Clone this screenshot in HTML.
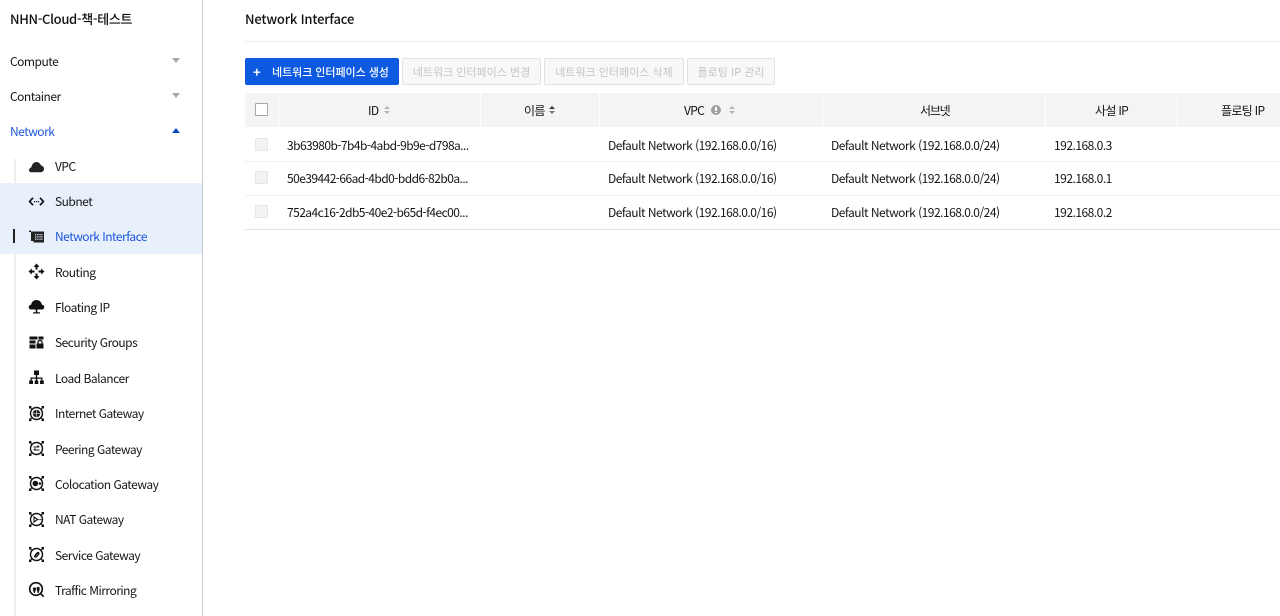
<!DOCTYPE html>
<html lang="ko"><head><meta charset="utf-8"><title>Network Interface</title>
<style>
*{box-sizing:border-box}
html,body{margin:0;padding:0;width:1280px;height:616px;overflow:hidden;background:#fff}
body{font-family:"Noto Sans CJK KR","Liberation Sans",sans-serif;font-size:12px;color:#151515;position:relative}
.a{position:absolute;white-space:nowrap;line-height:18px;letter-spacing:-.5px}
.h{letter-spacing:-.7px}
.box{position:absolute}
.ic{position:absolute;left:28px;width:17px;height:17px}
.btn{position:absolute;top:58px;height:27px;border:1px solid #e2e2e2;border-radius:2px;background:#f8f8f8;color:#c4c4c4;font-size:11px;line-height:26px;text-align:center;white-space:nowrap}
.cb{position:absolute;left:255px;width:13px;height:13px;background:#f3f3f3;border:1px solid #e6e6e6;border-radius:1px}
.th{position:absolute;top:93px;height:34px;background:#f4f4f4}
.sort{position:absolute;width:0;height:0;border-left:3px solid transparent;border-right:3px solid transparent}
</style></head><body>

<div class="box" style="left:202px;top:0;width:1px;height:616px;background:#c9c9c9"></div>
<div class="box" style="left:14px;top:159px;width:2px;height:457px;background:#eeeeee"></div>
<div class="box" style="left:0;top:183px;width:202px;height:71px;background:#e8f0fc"></div>
<div class="box" style="left:13px;top:229px;width:2px;height:14px;background:#222"></div>

<div class="a" style="left:10px;top:9px;font-size:13px;font-weight:500;color:#111;line-height:20px;letter-spacing:-.33px">NHN-Cloud-책-테스트</div>
<div class="a" style="left:10px;top:53px">Compute</div>
<div class="a" style="left:10px;top:88px">Container</div>
<div class="a" style="left:10px;top:123px;color:#1a56db">Network</div>
<div class="box" style="left:172px;top:58px;width:0;height:0;border-left:4px solid transparent;border-right:4px solid transparent;border-top:5px solid #a8a8a8"></div>
<div class="box" style="left:172px;top:93px;width:0;height:0;border-left:4px solid transparent;border-right:4px solid transparent;border-top:5px solid #a8a8a8"></div>
<div class="box" style="left:172px;top:128px;width:0;height:0;border-left:4px solid transparent;border-right:4px solid transparent;border-bottom:5px solid #0b4cc4"></div>

<div class="a" style="left:55px;top:158px">VPC</div>
<div class="a" style="left:55px;top:193px">Subnet</div>
<div class="a" style="left:55px;top:228px;color:#1a56db">Network Interface</div>
<div class="a" style="left:55px;top:264px">Routing</div>
<div class="a" style="left:55px;top:299px">Floating IP</div>
<div class="a" style="left:55px;top:334px">Security Groups</div>
<div class="a" style="left:55px;top:370px">Load Balancer</div>
<div class="a" style="left:55px;top:405px">Internet Gateway</div>
<div class="a" style="left:55px;top:441px">Peering Gateway</div>
<div class="a" style="left:55px;top:476px">Colocation Gateway</div>
<div class="a" style="left:55px;top:511px">NAT Gateway</div>
<div class="a" style="left:55px;top:547px">Service Gateway</div>
<div class="a" style="left:55px;top:582px">Traffic Mirroring</div>

<!-- VPC -->
<svg class="ic" style="top:158px" viewBox="0 0 17 17"><path fill="#222" d="M1 12.500C1 10.800 2 9.600 3.400 9.200 3.800 6.500 5.800 4 8.400 4c2.200 0 3.800 1.500 4.600 3.500 1.800.2 3 1.600 3 3.400 0 1.800-1.400 3.300-3.200 3.300H3.500C2 14.200 1 13.700 1 12.500z"/></svg>
<!-- Subnet -->
<svg class="ic" style="top:193px" viewBox="0 0 17 17"><path fill="none" stroke="#111" stroke-width="1.700" d="M5 4.800L1.600 8.500 5 12.200M12 4.800l3.400 3.700-3.400 3.700"/><path fill="#222" d="M5.900 8h1.300v1.300H5.900zM7.900 8h1.300v1.300H7.900zM9.900 8h1.300v1.300H9.900z"/></svg>
<!-- NI -->
<svg class="ic" style="top:228px" viewBox="0 0 17 17"><path fill="#222" d="M1 2.500h2v1h13v11H5.500v-1.500H3V4H1z"/><path fill="#d5e0f2" d="M7 6h1.300v1.300H7zM9.200 6h1.300v1.300H9.200zM11.400 6h1.300v1.300h-1.300zM13.300 6h1.200v1.300h-1.200zM7 8.300h1.300v1.300H7zM9.200 8.300h1.300v1.300H9.200zM11.400 8.300h1.300v1.300h-1.300zM13.300 8.300h1.200v1.300h-1.200zM7 10.600h1.300v1.300H7zM9.200 10.600h1.300v1.300H9.200zM11.400 10.600h1.300v1.300h-1.300zM13.300 10.600h1.200v1.300h-1.200z"/></svg>
<!-- Routing -->
<svg class="ic" style="top:263px" viewBox="0 0 17 17"><path fill="#111" d="M8.500.5l3 3.400H9.500V6.500h-2V3.900H5.500zM8.500 16.500l-3-3.400h2v-2.600h2v2.600h2zM.5 8.500l3.400-3v2h2.600v2H3.900v2zM16.500 8.500l-3.400 3v-2h-2.600v-2h2.600v-2z"/></svg>
<!-- Floating IP -->
<svg class="ic" style="top:298px" viewBox="0 0 17 17"><path fill="#111" d="M2 11.200C.8 10.700.5 9.300.9 8.300c.4-1 1.200-1.500 2.200-1.500C3.500 4 5.800 2 8.500 2s5 2 5.400 4.800c1 0 1.800.5 2.200 1.500.4 1 .1 2.400-1.100 2.900-.5.2-1 .300-1.500.300H3.500C3 11.500 2.500 11.400 2 11.200z"/><path fill="#111" d="M7.700 11h1.600v3.300H12v1.200H5v-1.200h2.700z"/></svg>
<!-- Security Groups -->
<svg class="ic" style="top:334px" viewBox="0 0 17 17"><path fill="#111" d="M1.500 2.500h8v3h-8zM10.500 2.500h5v3h-5zM1.500 6.500h6v3h-6zM1.500 10.500h6v4h-6zM8.500 9.500h7v5h-7z"/><path fill="none" stroke="#111" stroke-width="1.200" d="M10 9.500V8c0-1 .8-1.500 2-1.500s2 .5 2 1.500v1.500"/></svg>
<!-- Load Balancer -->
<svg class="ic" style="top:369px" viewBox="0 0 17 17"><path fill="#111" d="M6 1.500h5v4.500H9.200v2.500H14.500v3H15.800v3.500h-3.800v-3.500h1.200V9.800H9.200v1.700h1.100v3.500H6.700v-3.500h1.100V9.800H3.800v1.700H5V15H1.200v-3.500h1.300v-3h5.300V6H6z"/></svg>

<svg width="0" height="0" style="position:absolute"><defs>
<g id="gw"><circle cx="8.500" cy="8.500" r="6" fill="none" stroke="#111" stroke-width="1.400"/>
<path fill="none" stroke="#111" stroke-width="1.100" d="M2.500 3l1.500 1.500M14.500 3L13 4.500M2.500 14L4 12.500M14.500 14L13 12.500"/>
<path fill="#111" d="M1 1h2.400v2.400H1zM13.600 1H16v2.400h-2.400zM1 13.600h2.400V16H1zM13.600 13.600H16V16h-2.400z"/></g>
</defs></svg>

<!-- Internet Gateway -->
<svg class="ic" style="top:405px" viewBox="0 0 17 17"><use href="#gw"/><circle cx="8.500" cy="8.500" r="3.800" fill="#222"/><path fill="none" stroke="#ccc" stroke-width=".7" d="M5 8.500h7M8.500 5v7"/></svg>
<!-- Peering -->
<svg class="ic" style="top:440px" viewBox="0 0 17 17"><use href="#gw"/><path fill="none" stroke="#111" stroke-width="1.100" d="M5.500 7h5.500M9.500 5.500L11.300 7M11.500 10H6M7.500 8.500L5.700 10"/></svg>
<!-- Colocation -->
<svg class="ic" style="top:475px" viewBox="0 0 17 17"><use href="#gw"/><path fill="#111" d="M4.500 8.500a2.800 2.800 0 1 1 5.600 0 2.800 2.800 0 1 1-5.600 0z"/><circle cx="11.900" cy="8.500" r="1.300" fill="#111"/></svg>
<!-- NAT -->
<svg class="ic" style="top:511px" viewBox="0 0 17 17"><use href="#gw"/><path fill="none" stroke="#111" stroke-width="1.100" d="M6 6l3.500 2.500L6 11z"/><path fill="#111" d="M10.500 8h1.100v1.100h-1.100zM12.200 8h1.100v1.100h-1.100z"/></svg>
<!-- Service -->
<svg class="ic" style="top:546px" viewBox="0 0 17 17"><use href="#gw"/><path fill="none" stroke="#111" stroke-width="1.200" d="M6 11l5-5M7.200 8.800l1.800-1.800c1-1 2.600.4 1.500 1.600l-2 2c-1 1-2.400 0-1.700-1"/></svg>
<!-- Traffic Mirroring -->
<svg class="ic" style="top:581px" viewBox="0 0 17 17"><circle cx="8" cy="8" r="6.300" fill="none" stroke="#111" stroke-width="1.700"/><path fill="#111" d="M4.800 7.500a1.700 1.700 0 0 1 3.200 0V8L7 12H6L4.800 8zM8.500 7.500a1.600 1.600 0 0 1 3.200 0V8l-1 4h-1z"/><path fill="none" stroke="#111" stroke-width="1.700" d="M12.500 12.500l3.200 3.200"/></svg>

<!-- Main -->
<div class="a" style="left:245px;top:9px;font-size:13px;font-weight:500;color:#111;line-height:20px;letter-spacing:-.18px">Network Interface</div>
<div class="box" style="left:245px;top:41px;width:1035px;height:1px;background:#eeeeee"></div>

<div class="btn" style="left:245px;width:154px;background:#0d5ae0;border-color:#0d5ae0;color:#fff;font-weight:500;text-align:left"><span style="position:absolute;left:7px;top:0;font-size:13px;font-weight:700">+</span><span style="position:absolute;left:26px;top:0;letter-spacing:-.05px">네트워크 인터페이스 생성</span></div>
<div class="btn" style="left:402px;width:139px">네트워크 인터페이스 변경</div>
<div class="btn" style="left:544px;width:140px">네트워크 인터페이스 삭제</div>
<div class="btn" style="left:687px;width:88px">플로팅 IP 관리</div>

<div class="th" style="left:245px;width:33px"></div>
<div class="th" style="left:279px;width:201px"></div>
<div class="th" style="left:481px;width:118px"></div>
<div class="th" style="left:600px;width:222px"></div>
<div class="th" style="left:823px;width:222px"></div>
<div class="th" style="left:1046px;width:131px"></div>
<div class="th" style="left:1178px;width:102px"></div>

<div class="box" style="left:255px;top:103px;width:13px;height:13px;background:#fff;border:1px solid #a8a8a8;border-radius:1px"></div>
<div class="a h" style="left:368px;top:102px">ID</div>
<div class="sort" style="left:384px;top:106px;border-bottom:3px solid #b4b4b4"></div>
<div class="sort" style="left:384px;top:111px;border-top:3px solid #b4b4b4"></div>
<div class="a h" style="left:524px;top:102px">이름</div>
<div class="sort" style="left:549px;top:106px;border-bottom:3px solid #333"></div>
<div class="sort" style="left:549px;top:111px;border-top:3px solid #777"></div>
<div class="a h" style="left:684px;top:102px">VPC</div>
<div class="box" style="left:711px;top:105px;width:10px;height:10px;border-radius:50%;background:#a0a0a0"></div>
<div class="box" style="left:715px;top:107px;width:2px;height:4px;background:#fff"></div>
<div class="box" style="left:715px;top:112px;width:2px;height:1px;background:#fff"></div>
<div class="sort" style="left:729px;top:106px;border-bottom:3px solid #b4b4b4"></div>
<div class="sort" style="left:729px;top:111px;border-top:3px solid #b4b4b4"></div>
<div class="a h" style="left:920px;top:102px;letter-spacing:-1.2px">서브넷</div>
<div class="a h" style="left:1095px;top:102px">사설 IP</div>
<div class="a h" style="left:1221px;top:102px">플로팅 IP</div>

<div class="cb" style="top:138px"></div>
<div class="cb" style="top:171px"></div>
<div class="cb" style="top:205px"></div>

<div class="a" style="left:287px;top:137px;letter-spacing:-.56px">3b63980b-7b4b-4abd-9b9e-d798a...</div>
<div class="a" style="left:287px;top:170px;letter-spacing:-.56px">50e39442-66ad-4bd0-bdd6-82b0a...</div>
<div class="a" style="left:287px;top:204px;letter-spacing:-.56px">752a4c16-2db5-40e2-b65d-f4ec00...</div>

<div class="a" style="left:608px;top:137px">Default Network (192.168.0.0/16)</div>
<div class="a" style="left:608px;top:170px">Default Network (192.168.0.0/16)</div>
<div class="a" style="left:608px;top:204px">Default Network (192.168.0.0/16)</div>

<div class="a" style="left:831px;top:137px">Default Network (192.168.0.0/24)</div>
<div class="a" style="left:831px;top:170px">Default Network (192.168.0.0/24)</div>
<div class="a" style="left:831px;top:204px">Default Network (192.168.0.0/24)</div>

<div class="a" style="left:1054px;top:137px">192.168.0.3</div>
<div class="a" style="left:1054px;top:170px">192.168.0.1</div>
<div class="a" style="left:1054px;top:204px">192.168.0.2</div>

<div class="box" style="left:245px;top:161px;width:1035px;height:1px;background:#f0f0f0"></div>
<div class="box" style="left:245px;top:195px;width:1035px;height:1px;background:#f0f0f0"></div>
<div class="box" style="left:245px;top:229px;width:1035px;height:1px;background:#e4e4e4"></div>
</body></html>
